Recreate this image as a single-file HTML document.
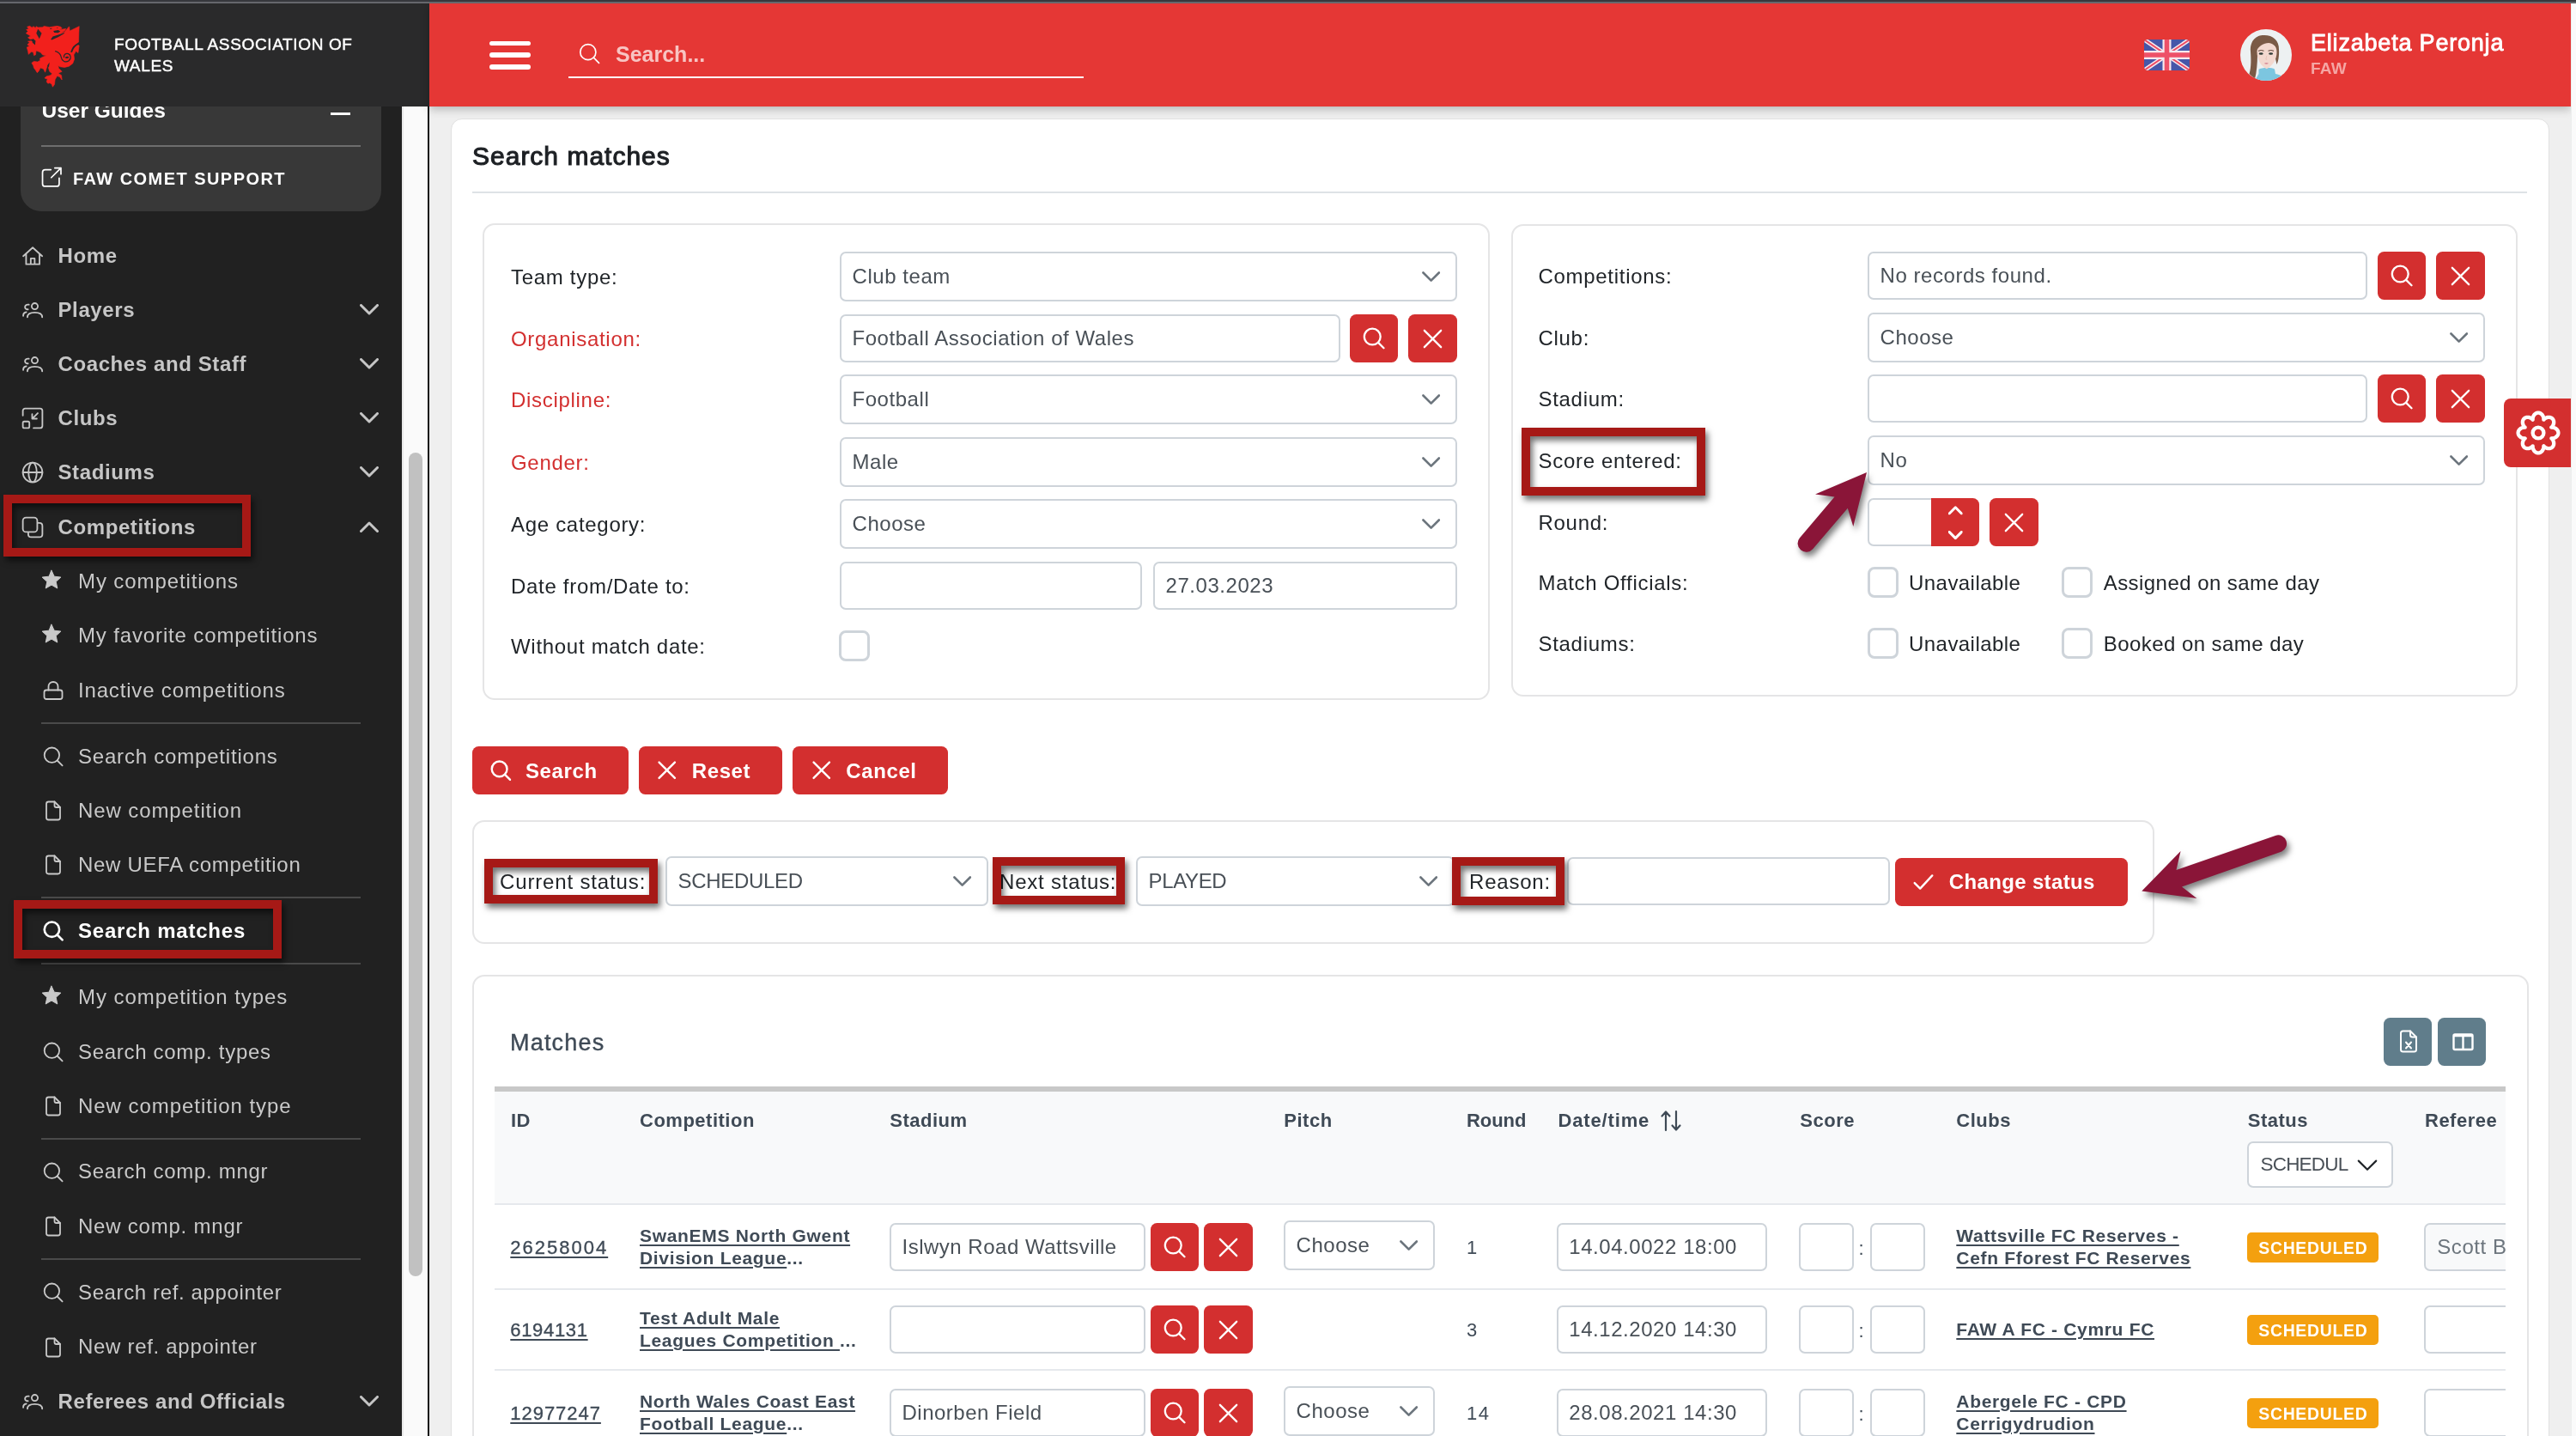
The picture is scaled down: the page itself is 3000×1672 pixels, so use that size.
<!DOCTYPE html>
<html lang="en">
<head>
<meta charset="utf-8">
<title>Search matches</title>
<style>
*{box-sizing:border-box;margin:0;padding:0}
html,body{width:3000px;height:1672px;overflow:hidden;background:#efefef;font-family:"Liberation Sans",sans-serif;font-size:24px;color:#212529;will-change:transform}
.a{position:absolute}
svg{display:block;overflow:visible}
.ic{fill:none;stroke:currentColor;stroke-width:1.5;stroke-linecap:round;stroke-linejoin:round}
#topbar{position:absolute;left:0;top:0;width:3000px;height:4px;background:#66676c;border-top:2px solid #37383d;z-index:50}
#rstrip{position:absolute;left:2994px;top:3px;width:6px;height:1669px;background:#fafafa;border-left:1.6px solid #eceeee;z-index:40}
/* header */
#logo{position:absolute;left:0;top:3px;width:500px;height:121px;background:#2a2a2b;z-index:30;color:#fff}
#hdr{position:absolute;left:500px;top:3px;width:2494px;height:121px;background:#e53735;z-index:30;box-shadow:0 3px 10px rgba(0,0,0,.25);color:#fff}
#logo .t{position:absolute;left:133px;top:36px;font-size:19px;line-height:25px;letter-spacing:.64px;-webkit-text-stroke:.45px #fff;color:#fff;white-space:nowrap}
/* sidebar */
#side{position:absolute;left:0;top:124px;width:468px;height:1548px;background:#212121;overflow:hidden;z-index:10;color:#c6c6c6}
#strack{position:absolute;left:468px;top:124px;width:30px;height:1548px;background:#fafafa;border-left:2px solid #e9e9e9;z-index:10}
#sthumb{position:absolute;left:476px;top:527px;width:16px;height:959px;border-radius:8px;background:#c1c1c1;z-index:11}
#vline{position:absolute;left:497.5px;top:124px;width:2.5px;height:1548px;background:#111;z-index:12}
.n1{position:absolute;left:0;width:468px;height:40px;font-weight:bold;font-size:24px;letter-spacing:.6px;line-height:40px;white-space:nowrap}
.n1 .i{position:absolute;left:25px;top:7px;width:26px;height:26px}
.n1 .x{position:absolute;left:67.5px;top:0}
.n1 .c{position:absolute;left:419px;top:13px;width:22px;height:13px}
.n2{position:absolute;left:0;width:468px;height:40px;font-size:24px;letter-spacing:.75px;line-height:40px;white-space:nowrap;color:#c9c9c9}
.n2 .i{position:absolute;left:50px;top:9px;width:24px;height:24px}
.n2 .x{position:absolute;left:91px;top:.4px}
.sdiv{position:absolute;left:48px;width:372px;height:2px;background:#4a4a4a}
.redbox{position:absolute;border:10px solid #a61916;box-shadow:3px 5px 7px rgba(0,0,0,.55), inset 3px 5px 7px rgba(0,0,0,.55);z-index:20;pointer-events:none}
/* main */
#main{position:absolute;left:500px;top:124px;width:2494px;height:1548px;background:#efefef;overflow:hidden}
#card{position:absolute;left:24.5px;top:14px;width:2444px;height:1700px;background:#fff;border:1.6px solid #e1e1e1;border-radius:13px}
.pnl{position:absolute;border:2px solid #e5e5e6;border-radius:14px;background:#fff}
.lbl{position:absolute;height:40px;line-height:40px;letter-spacing:.7px;white-space:nowrap;color:#212529}
.lbl.r{color:#d32f2f}
.inp{position:absolute;border:2px solid #ced4da;border-radius:7px;background:#fff;color:#495057;letter-spacing:.55px;white-space:nowrap;padding-left:12.5px;overflow:hidden}
.inp .chev{position:absolute;right:17.6px;top:50%;margin-top:-5.6px;width:21.3px;height:12.6px;color:#6c757d}
.btn{position:absolute;background:#d32f2f;border-radius:7.5px;color:#fff}
.btn svg{position:absolute;left:50%;top:50%}
.tb{position:absolute;background:#d32f2f;border-radius:7.5px;color:#fff;font-weight:bold;letter-spacing:.6px;white-space:nowrap;line-height:56px;height:56px}
.cb{position:absolute;width:36px;height:36px;border:3px solid #ced4da;border-radius:8px;background:#fff}
.th{position:absolute;height:30px;line-height:30px;font-size:22px;font-weight:bold;letter-spacing:.5px;color:#3f4a56;white-space:nowrap}
.td{position:absolute;line-height:26px;font-size:21px;color:#3f4a56;white-space:nowrap}
.td.b{font-weight:bold;letter-spacing:.68px}
.lk{text-decoration:underline;text-decoration-thickness:2px;text-underline-offset:3px}
.nd{display:inline-block;text-decoration:none}
</style>
</head>
<body>
<svg width="0" height="0" style="position:absolute">
<defs>
<symbol id="i-search" viewBox="0 0 24 24"><circle cx="10.4" cy="10.2" r="8.7"/><path d="M16.7 16.5 L22.6 22.4"/></symbol>
<symbol id="i-times" viewBox="0 0 24 24"><path d="M4 4 L20 20 M20 4 L4 20"/></symbol>
<symbol id="i-chev" viewBox="0 0 22 13"><path d="M1.5 1.5 L11 11 L20.5 1.5"/></symbol>
<symbol id="i-chevu" viewBox="0 0 22 13"><path d="M1.5 11.5 L11 2 L20.5 11.5"/></symbol>
<symbol id="i-home" viewBox="0 0 24 24"><path d="M1.9 12.2 L12.1 2.95 L22.3 12.2 M5 9.6 V20.95 H19.4 V9.6 M10 20.95 V14.7 H14.2 V20.95"/></symbol>
<symbol id="i-users" viewBox="0 0 24 24"><circle cx="14.3" cy="7.9" r="3.3"/><path d="M6.4 19.7 C6.4 16 9.5 14.6 14.3 14.6 C19.1 14.6 22.3 16 22.3 19.7"/><path d="M8 6.2 C5.4 5.6 3.8 7.2 3.8 8.7 C3.8 10.4 5.2 11.5 7 11.3"/><path d="M1.9 18.2 C1.9 15.8 3 14.6 5.2 14.3"/></symbol>
<symbol id="i-clubs" viewBox="0 0 24 24"><path d="M1.5 9 V4 C1.5 2.6 2.6 1.5 4 1.5 H20 C21.4 1.5 22.5 2.6 22.5 4 V20 C22.5 21.4 21.4 22.5 20 22.5 H13"/><rect x="1.5" y="15.5" width="7" height="7" rx="1.5"/><path d="M17.5 6.5 L11.5 12.5 M11.5 7.5 V12.5 H16.5"/></symbol>
<symbol id="i-globe" viewBox="0 0 24 24"><circle cx="12" cy="12" r="10.5"/><path d="M1.5 12 H22.5"/><ellipse cx="12" cy="12" rx="4.4" ry="10.5"/></symbol>
<symbol id="i-clone" viewBox="0 0 24 24"><rect x="1.5" y="1.5" width="15.5" height="15.5" rx="3.5"/><path d="M17.5 7.3 H19.3 C21.1 7.3 22.5 8.7 22.5 10.5 V19.3 C22.5 21.1 21.1 22.5 19.3 22.5 H10.5 C8.7 22.5 7.3 21.1 7.3 19.3 V17.5"/></symbol>
<symbol id="i-star" viewBox="0 0 24 24"><path d="M12 1.2 L15.2 8.2 L22.9 9.1 L17.2 14.3 L18.8 22 L12 18.1 L5.2 22 L6.8 14.3 L1.1 9.1 L8.8 8.2 Z" fill="currentColor" stroke-width="1"/></symbol>
<symbol id="i-lock" viewBox="0 0 24 24"><rect x="1.5" y="11.5" width="21" height="10.5" rx="2.5"/><path d="M6.5 11.5 V7.5 C6.5 4 9 2 12 2 C15 2 17.5 4 17.5 7.5 V11.5"/></symbol>
<symbol id="i-file" viewBox="0 0 24 24"><path d="M13.5 1.5 H6.5 C5 1.5 4 2.5 4 4 V20 C4 21.5 5 22.5 6.5 22.5 H17.5 C19 22.5 20 21.5 20 20 V8 Z"/><path d="M13.5 1.5 V6 C13.5 7.2 14.3 8 15.5 8 H20"/></symbol>
<symbol id="i-ext" viewBox="0 0 24 24"><path d="M11 3.5 H4.5 C2.8 3.5 1.5 4.8 1.5 6.5 V19.5 C1.5 21.2 2.8 22.5 4.5 22.5 H17.5 C19.2 22.5 20.5 21.2 20.5 19.5 V13"/><path d="M15.5 1.5 H22.5 V8.5 M22.5 1.5 L11.5 12.5"/></symbol>
<symbol id="i-check" viewBox="0 0 24 24"><path d="M2.5 13 L8.5 19 L21.5 5"/></symbol>
</defs>
</svg>

<div id="topbar"></div><div id="rstrip"></div>
<div id="logo">
<svg class="a" style="left:20px;top:17px" width="90" height="90" viewBox="0 0 1436 1436"><path fill="#f2201c" stroke="#f2201c" stroke-width="10" stroke-linejoin="round" d="M165 300 L200 262 L170 232 L215 215 L185 180 L235 165 L275 195 L300 170 L340 200 L355 172 L385 190 L470 188 L500 168 L600 186 L740 165 L810 180 L832 206 L775 236 L905 214 L885 250 L800 300 L880 275 L960 178 L968 176 L976 256 L1152 170 L1146 300 L1142 462 L1100 500 L1152 528 L1132 662 L1092 632 L1052 700 L1062 780 L1032 860 L962 912 L880 932 L800 922 L762 902 L772 950 L832 1010 L762 1040 L822 1080 L832 1164 L790 1110 L742 1092 L704 1160 L694 1250 L660 1296 L640 1240 L602 1222 L572 1232 L546 1200 L562 1150 L510 1132 L540 1100 L620 1080 L650 1050 L602 1010 L582 940 L600 840 L562 900 L540 962 L520 1024 L490 962 L432 940 L402 1000 L372 1032 L340 980 L310 940 L300 900 L270 850 L310 820 L380 830 L430 800 L420 770 L470 740 L540 716 L470 700 L440 660 L400 640 L352 622 L342 700 L312 712 L300 652 L262 642 L212 692 L200 630 L180 560 L230 540 L190 510 L230 470 L200 450 L262 440 L330 500 L342 440 L300 400 L240 410 L200 380 L250 350 Z"/><g fill="#2a2a2b"><path d="M385 218 L455 300 L412 402 L356 300 Z"/><path d="M292 402 L340 440 L334 520 L282 470 Z"/><path d="M672 256 L762 240 L802 262 L760 292 L690 286 Z"/><path d="M625 412 L662 360 L790 320 L884 282 L862 312 L760 372 L642 424 Z"/><ellipse cx="626" cy="210" rx="20" ry="8"/><ellipse cx="746" cy="198" rx="14" ry="6"/><ellipse cx="926" cy="748" rx="34" ry="17" transform="rotate(-12 926 748)"/><path d="M560 900 L600 836 L590 930 Z"/></g><g fill="none" stroke="#2a2a2b" stroke-width="22" stroke-linecap="round"><path d="M712 632 C770 650 810 690 820 750 C830 820 900 850 960 810 C1010 770 1000 700 950 680 C900 665 860 700 870 745" stroke-width="20"/><path d="M1010 640 C1030 580 1070 520 1140 494" stroke-width="30"/></g></svg>
<div class="t">FOOTBALL ASSOCIATION OF<br>WALES</div>
</div>
<div id="hdr">
<div class="a" style="left:70px;top:44.5px;width:48px;height:5.5px;border-radius:3px;background:#fff"></div>
<div class="a" style="left:70px;top:58.4px;width:48px;height:5.5px;border-radius:3px;background:#fff"></div>
<div class="a" style="left:70px;top:72.2px;width:48px;height:5.5px;border-radius:3px;background:#fff"></div>
<div class="a" style="left:162px;top:85.5px;width:600px;height:2.5px;background:#fff"></div>
<svg class="ic a" width="25" height="25" style="left:173.5px;top:46.5px;stroke-width:1.6;color:#fff"><use href="#i-search"/></svg>
<div class="a" style="left:217px;top:40px;height:40px;line-height:40px;font-size:25px;font-weight:bold;letter-spacing:0;color:#f8c4c2">Search...</div>
<svg class="a" style="left:1996.7px;top:43px" width="53" height="36" viewBox="0 0 53 36"><defs><clipPath id="fc"><rect width="53" height="36" rx="4.5"/></clipPath></defs><g clip-path="url(#fc)"><rect width="53" height="36" fill="#4657a9"/><path d="M0 0 L53 36 M53 0 L0 36" stroke="#f6e9ee" stroke-width="5"/><path d="M0 0 L53 36 M53 0 L0 36" stroke="#ec4a62" stroke-width="1.9"/><path d="M26.5 0 V36 M0 18 H53" stroke="#f6e9ee" stroke-width="10"/><path d="M26.5 0 V36 M0 18 H53" stroke="#ee5168" stroke-width="5.6"/></g></svg>
<svg class="a" style="left:2109px;top:31px" width="60" height="60" viewBox="0 0 60 60"><defs><clipPath id="ac"><circle cx="30" cy="30" r="30"/></clipPath></defs><g clip-path="url(#ac)"><rect width="60" height="60" fill="#edf1f2"/><path d="M12 26 C11 12 20 6.5 28 7 C38 7 45.5 13 45 24 C45.5 32 44 38 42.5 41 L40 30 L20 30 C20 40 19 50 17 58 L10.5 52 C13 44 12.5 34 12 26 Z" fill="#7a5a46"/><path d="M21.5 47 C24 44.5 37 44.5 40 46.5 L41 52 C44 52.5 47 53.5 49 55 L49 62 L16 62 C18 58 20 55 21.5 52 Z" fill="#7cc6e0"/><path d="M19.5 26 C19.5 18 24 15 30.5 15 C38 15 42.5 19 42.5 27 C42.5 35 37.5 43 30.8 46.2 C24.5 43.5 19.5 36 19.5 26 Z" fill="#f3d8cf"/><path d="M19 25 C19.5 17 24 13 30 12.8 C37 12.5 42.5 16 43.5 24 C41.5 19.5 37.5 16.2 33 16 C27 16.5 22 19 19 25 Z" fill="#7a5a46"/><ellipse cx="24.2" cy="28.5" rx="2.5" ry="1.25" fill="#2f3a36"/><ellipse cx="35.6" cy="28.5" rx="2.5" ry="1.25" fill="#2f3a36"/><path d="M21 25.3 Q24 23.8 27.5 25.2 M32.5 25.2 Q36 23.8 39 25.3" stroke="#5a4034" stroke-width="1" fill="none"/><path d="M30.8 31 L29.8 35 L31.2 35.3" stroke="#e0b9ad" stroke-width=".6" fill="none"/><path d="M27.8 39.8 Q30.4 38.2 33 39.8 Q30.4 41.8 27.8 39.8 Z" fill="#d98a98"/></g></svg>
<div class="a" style="left:2191px;top:26.5px;font-size:27px;line-height:40px;letter-spacing:.8px;-webkit-text-stroke:.85px #fff;white-space:nowrap;color:#fff">Elizabeta Peronja</div>
<div class="a" style="left:2191px;top:62px;font-size:19px;line-height:30px;font-weight:bold;letter-spacing:.3px;color:#f5a5a3">FAW</div>
</div>
<div id="side">
<div class="a" style="left:24px;top:-64px;width:420px;height:186px;background:#383838;border-radius:24px"></div>
<div class="a" style="left:48.5px;top:-15px;height:40px;line-height:40px;font-size:24.5px;font-weight:bold;letter-spacing:0;color:#fff">User Guides</div>
<div class="a" style="left:384.5px;top:6.5px;width:23.5px;height:3px;background:#fff"></div>
<div class="a" style="left:48px;top:45px;width:372px;height:2px;background:#6e6e6e"></div>
<svg class="ic a" width="24.5" height="24.5" style="left:48px;top:70px;stroke-width:1.7;color:#fff"><use href="#i-ext"/></svg>
<div class="a" style="left:85px;top:64.30000000000001px;height:40px;line-height:40px;font-size:20px;font-weight:bold;letter-spacing:1.45px;color:#fff;white-space:nowrap">FAW COMET SUPPORT</div>
<div class="n1" style="top:153.60000000000002px"><svg class="ic i" width="26" height="26" style="stroke-width:1.7"><use href="#i-home"/></svg><span class="x">Home</span></div>
<div class="n1" style="top:216.8px"><svg class="ic i" width="26" height="26" style="stroke-width:1.7"><use href="#i-users"/></svg><span class="x">Players</span><svg class="ic c" width="22" height="13" style="stroke-width:3"><use href="#i-chev"/></svg></div>
<div class="n1" style="top:279.8px"><svg class="ic i" width="26" height="26" style="stroke-width:1.7"><use href="#i-users"/></svg><span class="x">Coaches and Staff</span><svg class="ic c" width="22" height="13" style="stroke-width:3"><use href="#i-chev"/></svg></div>
<div class="n1" style="top:343.3px"><svg class="ic i" width="26" height="26" style="stroke-width:1.7"><use href="#i-clubs"/></svg><span class="x">Clubs</span><svg class="ic c" width="22" height="13" style="stroke-width:3"><use href="#i-chev"/></svg></div>
<div class="n1" style="top:406.29999999999995px"><svg class="ic i" width="26" height="26" style="stroke-width:1.7"><use href="#i-globe"/></svg><span class="x">Stadiums</span><svg class="ic c" width="22" height="13" style="stroke-width:3"><use href="#i-chev"/></svg></div>
<div class="n1" style="top:469.70000000000005px"><svg class="ic i" width="26" height="26" style="stroke-width:1.7"><use href="#i-clone"/></svg><span class="x">Competitions</span><svg class="ic c" width="22" height="13" style="stroke-width:3"><use href="#i-chevu"/></svg></div>
<div class="n1" style="top:1487.8px"><svg class="ic i" width="26" height="26" style="stroke-width:1.7"><use href="#i-users"/></svg><span class="x">Referees and Officials</span><svg class="ic c" width="22" height="13" style="stroke-width:3"><use href="#i-chev"/></svg></div>
<div class="n2" style="top:532.7px;letter-spacing:0.9px;"><svg class="ic i" width="27.5" height="27.5" style="stroke-width:1.8;margin-left:-1.75px;margin-top:-2.35px"><use href="#i-star"/></svg><span class="x">My competitions</span></div>
<div class="n2" style="top:595.8px;letter-spacing:0.86px;"><svg class="ic i" width="27.5" height="27.5" style="stroke-width:1.8;margin-left:-1.75px;margin-top:-2.35px"><use href="#i-star"/></svg><span class="x">My favorite competitions</span></div>
<div class="n2" style="top:659.3px;letter-spacing:0.83px;"><svg class="ic i" width="24" height="24" style="stroke-width:1.8;margin-left:0.0px;margin-top:0.0px"><use href="#i-lock"/></svg><span class="x">Inactive competitions</span></div>
<div class="n2" style="top:736.2px;letter-spacing:0.8px;"><svg class="ic i" width="24" height="24" style="stroke-width:1.8;margin-left:0.0px;margin-top:0.0px"><use href="#i-search"/></svg><span class="x">Search competitions</span></div>
<div class="n2" style="top:799.3px;letter-spacing:0.9px;"><svg class="ic i" width="24" height="24" style="stroke-width:1.8;margin-left:0.0px;margin-top:0.0px"><use href="#i-file"/></svg><span class="x">New competition</span></div>
<div class="n2" style="top:862.4px;letter-spacing:0.7px;"><svg class="ic i" width="24" height="24" style="stroke-width:1.8;margin-left:0.0px;margin-top:0.0px"><use href="#i-file"/></svg><span class="x">New UEFA competition</span></div>
<div class="n2" style="top:939.2px;font-weight:bold;color:#fff;letter-spacing:.78px;"><svg class="ic i" width="24" height="24" style="stroke-width:2.6;margin-left:0.0px;margin-top:0.0px"><use href="#i-search"/></svg><span class="x">Search matches</span></div>
<div class="n2" style="top:1016.5px;letter-spacing:0.94px;"><svg class="ic i" width="27.5" height="27.5" style="stroke-width:1.8;margin-left:-1.75px;margin-top:-2.35px"><use href="#i-star"/></svg><span class="x">My competition types</span></div>
<div class="n2" style="top:1080.2px;letter-spacing:0.7px;"><svg class="ic i" width="24" height="24" style="stroke-width:1.8;margin-left:0.0px;margin-top:0.0px"><use href="#i-search"/></svg><span class="x">Search comp. types</span></div>
<div class="n2" style="top:1143.4px;letter-spacing:0.96px;"><svg class="ic i" width="24" height="24" style="stroke-width:1.8;margin-left:0.0px;margin-top:0.0px"><use href="#i-file"/></svg><span class="x">New competition type</span></div>
<div class="n2" style="top:1220px;letter-spacing:0.69px;"><svg class="ic i" width="24" height="24" style="stroke-width:1.8;margin-left:0.0px;margin-top:0.0px"><use href="#i-search"/></svg><span class="x">Search comp. mngr</span></div>
<div class="n2" style="top:1283.3px;letter-spacing:0.78px;"><svg class="ic i" width="24" height="24" style="stroke-width:1.8;margin-left:0.0px;margin-top:0.0px"><use href="#i-file"/></svg><span class="x">New comp. mngr</span></div>
<div class="n2" style="top:1360.4px;letter-spacing:0.63px;"><svg class="ic i" width="24" height="24" style="stroke-width:1.8;margin-left:0.0px;margin-top:0.0px"><use href="#i-search"/></svg><span class="x">Search ref. appointer</span></div>
<div class="n2" style="top:1423.8px;letter-spacing:0.7px;"><svg class="ic i" width="24" height="24" style="stroke-width:1.8;margin-left:0.0px;margin-top:0.0px"><use href="#i-file"/></svg><span class="x">New ref. appointer</span></div>
<div class="sdiv" style="top:716.8px"></div>
<div class="sdiv" style="top:919.8px"></div>
<div class="sdiv" style="top:996.5px"></div>
<div class="sdiv" style="top:1200.5px"></div>
<div class="sdiv" style="top:1340.8px"></div>
<div class="redbox" style="left:4px;top:452px;width:288px;height:72px"></div>
<div class="redbox" style="left:16px;top:924px;width:312px;height:68px"></div>
</div>
<div id="strack"></div><div id="sthumb"></div><div id="vline"></div>
<div id="main">
<div id="card"></div>
<div class="a" style="left:50px;top:32.6px;height:50px;line-height:50px;font-size:30px;letter-spacing:1px;-webkit-text-stroke:1.1px #1d2024;color:#1d2024;white-space:nowrap">Search matches</div>
<div class="a" style="left:50px;top:99px;width:2393px;height:2px;background:#dee2e6"></div>
<div class="pnl" style="left:61.8px;top:136.4px;width:1173.2px;height:554.6px"></div>
<div class="pnl" style="left:1259.6px;top:136.6px;width:1172.4px;height:550.8px"></div>
<div class="lbl" style="left:95px;top:179.3px;">Team type:</div>
<div class="lbl r" style="left:95px;top:251.25px;">Organisation:</div>
<div class="lbl r" style="left:95px;top:322.25px;">Discipline:</div>
<div class="lbl r" style="left:95px;top:395.2px;">Gender:</div>
<div class="lbl" style="left:95px;top:467.2px;">Age category:</div>
<div class="lbl" style="left:95px;top:539.15px;">Date from/Date to:</div>
<div class="lbl" style="left:95px;top:609.25px;">Without match date:</div>
<div class="inp" style="left:478px;top:169px;width:719px;height:58px;line-height:54px;">Club team<svg class="ic chev" width="21.3" height="12.6" style="stroke-width:2.7"><use href="#i-chev"/></svg></div>
<div class="inp" style="left:478px;top:242px;width:583px;height:56px;line-height:52px;">Football Association of Wales</div>
<div class="btn" style="left:1072px;top:242px;width:56px;height:56px;"><svg class="ic" width="26" height="26" style="margin-left:-13.0px;margin-top:-13.0px;stroke-width:2.12"><use href="#i-search"/></svg></div>
<div class="btn" style="left:1140px;top:242px;width:57px;height:56px;"><svg class="ic" width="29" height="29" style="margin-left:-14.5px;margin-top:-14.5px;stroke-width:1.9"><use href="#i-times"/></svg></div>
<div class="inp" style="left:478px;top:312px;width:719px;height:58px;line-height:54px;">Football<svg class="ic chev" width="21.3" height="12.6" style="stroke-width:2.7"><use href="#i-chev"/></svg></div>
<div class="inp" style="left:478px;top:385px;width:719px;height:58px;line-height:54px;">Male<svg class="ic chev" width="21.3" height="12.6" style="stroke-width:2.7"><use href="#i-chev"/></svg></div>
<div class="inp" style="left:478px;top:457px;width:719px;height:58px;line-height:54px;">Choose<svg class="ic chev" width="21.3" height="12.6" style="stroke-width:2.7"><use href="#i-chev"/></svg></div>
<div class="inp" style="left:478px;top:530px;width:352px;height:56px;line-height:52px;"></div>
<div class="inp" style="left:843px;top:530px;width:354px;height:56px;line-height:52px;">27.03.2023</div>
<div class="cb" style="left:477.4px;top:610px"></div>
<div class="lbl" style="left:1291.5px;top:178.25px;">Competitions:</div>
<div class="lbl" style="left:1291.5px;top:250.4px;">Club:</div>
<div class="lbl" style="left:1291.5px;top:320.75px;">Stadium:</div>
<div class="lbl" style="left:1291.5px;top:393.25px;">Score entered:</div>
<div class="lbl" style="left:1291.5px;top:465.35px;">Round:</div>
<div class="lbl" style="left:1291.5px;top:534.6px;">Match Officials:</div>
<div class="lbl" style="left:1291.5px;top:605.5px;">Stadiums:</div>
<div class="inp" style="left:1675px;top:169px;width:582px;height:56px;line-height:52px;">No records found.</div>
<div class="btn" style="left:2269px;top:169px;width:56px;height:56px;"><svg class="ic" width="26" height="26" style="margin-left:-13.0px;margin-top:-13.0px;stroke-width:2.12"><use href="#i-search"/></svg></div>
<div class="btn" style="left:2337px;top:169px;width:57px;height:56px;"><svg class="ic" width="29" height="29" style="margin-left:-14.5px;margin-top:-14.5px;stroke-width:1.9"><use href="#i-times"/></svg></div>
<div class="inp" style="left:1675px;top:240px;width:719px;height:58px;line-height:54px;">Choose<svg class="ic chev" width="21.3" height="12.6" style="stroke-width:2.7"><use href="#i-chev"/></svg></div>
<div class="inp" style="left:1675px;top:312px;width:582px;height:56px;line-height:52px;"></div>
<div class="btn" style="left:2269px;top:312px;width:56px;height:56px;"><svg class="ic" width="26" height="26" style="margin-left:-13.0px;margin-top:-13.0px;stroke-width:2.12"><use href="#i-search"/></svg></div>
<div class="btn" style="left:2337px;top:312px;width:57px;height:56px;"><svg class="ic" width="29" height="29" style="margin-left:-14.5px;margin-top:-14.5px;stroke-width:1.9"><use href="#i-times"/></svg></div>
<div class="inp" style="left:1675px;top:383px;width:719px;height:58px;line-height:54px;">No<svg class="ic chev" width="21.3" height="12.6" style="stroke-width:2.7"><use href="#i-chev"/></svg></div>
<div class="inp" style="left:1675px;top:456px;width:85px;height:56px;line-height:52px;"></div>
<div class="btn" style="left:1749px;top:456px;width:56px;height:56px;border-radius:0 7.5px 7.5px 0"><svg class="ic" width="16.6" height="10.4" style="left:50%;top:8.6px;margin-left:-8.3px;stroke-width:4"><use href="#i-chevu"/></svg><svg class="ic" width="16.6" height="10.4" style="left:50%;top:37.6px;margin-left:-8.3px;stroke-width:4"><use href="#i-chev"/></svg></div>
<div class="btn" style="left:1817px;top:456px;width:57px;height:56px;"><svg class="ic" width="29" height="29" style="margin-left:-14.5px;margin-top:-14.5px;stroke-width:1.9"><use href="#i-times"/></svg></div>
<div class="cb" style="left:1675px;top:536px"></div>
<div class="lbl" style="left:1723px;top:534.6px;letter-spacing:.45px">Unavailable</div>
<div class="cb" style="left:1901px;top:536px"></div>
<div class="lbl" style="left:1949.7px;top:534.6px;letter-spacing:.45px">Assigned on same day</div>
<div class="cb" style="left:1675px;top:607px"></div>
<div class="lbl" style="left:1723px;top:605.6px;letter-spacing:.45px">Unavailable</div>
<div class="cb" style="left:1901px;top:607px"></div>
<div class="lbl" style="left:1949.7px;top:605.6px;letter-spacing:.45px">Booked on same day</div>
<div class="redbox" style="left:1272px;top:374px;width:214px;height:78.5px"></div>
<div class="a" style="left:2416px;top:340px;width:78px;height:80px;background:#d32f2f;border-radius:8px 0 0 8px;color:#fff"><svg class="a" style="left:15px;top:15px" width="50" height="50" viewBox="0 0 50 50" fill="none" stroke="#fff" stroke-width="4.3" stroke-linejoin="round"><circle cx="25" cy="25" r="6.4"/><path d="M25.00 1.60 L25.61 1.64 L26.22 1.74 L26.82 1.92 L27.40 2.17 L27.96 2.49 L28.50 2.88 L29.02 3.33 L29.50 3.84 L29.94 4.42 L30.34 5.06 L30.70 5.76 L31.00 6.53 L31.24 7.38 L31.40 8.34 L31.35 9.66 L32.26 8.69 L33.05 8.13 L33.82 7.70 L34.57 7.37 L35.32 7.12 L36.06 6.95 L36.78 6.86 L37.49 6.83 L38.17 6.88 L38.82 6.99 L39.45 7.16 L40.03 7.40 L40.58 7.69 L41.09 8.05 L41.55 8.45 L41.95 8.91 L42.31 9.42 L42.60 9.97 L42.84 10.55 L43.01 11.18 L43.12 11.83 L43.17 12.51 L43.14 13.22 L43.05 13.94 L42.88 14.68 L42.63 15.43 L42.30 16.18 L41.87 16.95 L41.31 17.74 L40.34 18.65 L41.66 18.60 L42.62 18.76 L43.47 19.00 L44.24 19.30 L44.94 19.66 L45.58 20.06 L46.16 20.50 L46.67 20.98 L47.12 21.50 L47.51 22.04 L47.83 22.60 L48.08 23.18 L48.26 23.78 L48.36 24.39 L48.40 25.00 L48.36 25.61 L48.26 26.22 L48.08 26.82 L47.83 27.40 L47.51 27.96 L47.12 28.50 L46.67 29.02 L46.16 29.50 L45.58 29.94 L44.94 30.34 L44.24 30.70 L43.47 31.00 L42.62 31.24 L41.66 31.40 L40.34 31.35 L41.31 32.26 L41.87 33.05 L42.30 33.82 L42.63 34.57 L42.88 35.32 L43.05 36.06 L43.14 36.78 L43.17 37.49 L43.12 38.17 L43.01 38.82 L42.84 39.45 L42.60 40.03 L42.31 40.58 L41.95 41.09 L41.55 41.55 L41.09 41.95 L40.58 42.31 L40.03 42.60 L39.45 42.84 L38.82 43.01 L38.17 43.12 L37.49 43.17 L36.78 43.14 L36.06 43.05 L35.32 42.88 L34.57 42.63 L33.82 42.30 L33.05 41.87 L32.26 41.31 L31.35 40.34 L31.40 41.66 L31.24 42.62 L31.00 43.47 L30.70 44.24 L30.34 44.94 L29.94 45.58 L29.50 46.16 L29.02 46.67 L28.50 47.12 L27.96 47.51 L27.40 47.83 L26.82 48.08 L26.22 48.26 L25.61 48.36 L25.00 48.40 L24.39 48.36 L23.78 48.26 L23.18 48.08 L22.60 47.83 L22.04 47.51 L21.50 47.12 L20.98 46.67 L20.50 46.16 L20.06 45.58 L19.66 44.94 L19.30 44.24 L19.00 43.47 L18.76 42.62 L18.60 41.66 L18.65 40.34 L17.74 41.31 L16.95 41.87 L16.18 42.30 L15.43 42.63 L14.68 42.88 L13.94 43.05 L13.22 43.14 L12.51 43.17 L11.83 43.12 L11.18 43.01 L10.55 42.84 L9.97 42.60 L9.42 42.31 L8.91 41.95 L8.45 41.55 L8.05 41.09 L7.69 40.58 L7.40 40.03 L7.16 39.45 L6.99 38.82 L6.88 38.17 L6.83 37.49 L6.86 36.78 L6.95 36.06 L7.12 35.32 L7.37 34.57 L7.70 33.82 L8.13 33.05 L8.69 32.26 L9.66 31.35 L8.34 31.40 L7.38 31.24 L6.53 31.00 L5.76 30.70 L5.06 30.34 L4.42 29.94 L3.84 29.50 L3.33 29.02 L2.88 28.50 L2.49 27.96 L2.17 27.40 L1.92 26.82 L1.74 26.22 L1.64 25.61 L1.60 25.00 L1.64 24.39 L1.74 23.78 L1.92 23.18 L2.17 22.60 L2.49 22.04 L2.88 21.50 L3.33 20.98 L3.84 20.50 L4.42 20.06 L5.06 19.66 L5.76 19.30 L6.53 19.00 L7.38 18.76 L8.34 18.60 L9.66 18.65 L8.69 17.74 L8.13 16.95 L7.70 16.18 L7.37 15.43 L7.12 14.68 L6.95 13.94 L6.86 13.22 L6.83 12.51 L6.88 11.83 L6.99 11.18 L7.16 10.55 L7.40 9.97 L7.69 9.42 L8.05 8.91 L8.45 8.45 L8.91 8.05 L9.42 7.69 L9.97 7.40 L10.55 7.16 L11.18 6.99 L11.83 6.88 L12.51 6.83 L13.22 6.86 L13.94 6.95 L14.68 7.12 L15.43 7.37 L16.18 7.70 L16.95 8.13 L17.74 8.69 L18.65 9.66 L18.60 8.34 L18.76 7.38 L19.00 6.53 L19.30 5.76 L19.66 5.06 L20.06 4.42 L20.50 3.84 L20.98 3.33 L21.50 2.88 L22.04 2.49 L22.60 2.17 L23.18 1.92 L23.78 1.74 L24.39 1.64 Z"/></svg></div>
<svg class="a" style="left:1580px;top:416px;z-index:21;filter:drop-shadow(3px 5px 3.5px rgba(0,0,0,.5))" width="110" height="120" viewBox="0 0 110 120"><path d="M94 10 L34 35.6 L56.5 38.6 L16 86.2 A10 10 0 0 0 31.2 99.2 L71.8 51.7 L78.3 73.1 Z" fill="#8a1538"/></svg>
<div class="tb" style="left:50px;top:744.8px;width:181.5px"><svg class="ic a" width="24.5" height="24.5" style="left:20.75px;top:15.75px;stroke-width:2.36"><use href="#i-search"/></svg><span class="a" style="left:62px;top:1px">Search</span></div>
<div class="tb" style="left:243.8px;top:744.8px;width:167.0px"><svg class="ic a" width="27.5" height="27.5" style="left:19.25px;top:14.25px;stroke-width:2.13"><use href="#i-times"/></svg><span class="a" style="left:62px;top:1px">Reset</span></div>
<div class="tb" style="left:423.3px;top:744.8px;width:180.5px"><svg class="ic a" width="27.5" height="27.5" style="left:19.25px;top:14.25px;stroke-width:2.13"><use href="#i-times"/></svg><span class="a" style="left:62px;top:1px">Cancel</span></div>
<div class="pnl" style="left:49.6px;top:830.8px;width:1959.2000000000003px;height:143.79999999999995px"></div>
<div class="lbl" style="left:82px;top:883.3px;letter-spacing:.85px">Current status:</div>
<div class="inp" style="left:275px;top:873px;width:376px;height:58px;line-height:54px;letter-spacing:-.3px">SCHEDULED<svg class="ic chev" width="21.3" height="12.6" style="stroke-width:2.7"><use href="#i-chev"/></svg></div>
<div class="lbl" style="left:664px;top:883.3px;letter-spacing:.8px">Next status:</div>
<div class="inp" style="left:823px;top:873px;width:371px;height:58px;line-height:54px;letter-spacing:-.35px">PLAYED<svg class="ic chev" width="21.3" height="12.6" style="stroke-width:2.7"><use href="#i-chev"/></svg></div>
<div class="lbl" style="left:1211px;top:883.3px;letter-spacing:.8px">Reason:</div>
<div class="inp" style="left:1325px;top:874px;width:376px;height:56px;line-height:52px;"></div>
<div class="tb" style="left:1706.8px;top:875px;width:271px"><svg class="ic a" width="26" height="26" style="left:20px;top:15px;stroke-width:2.2"><use href="#i-check"/></svg><span class="a" style="left:63px;top:0;letter-spacing:.35px">Change status</span></div>
<div class="redbox" style="left:63.8px;top:876px;width:202px;height:51.5px;border-width:10px"></div>
<div class="redbox" style="left:656px;top:874px;width:154px;height:55px;border-width:10px"></div>
<div class="redbox" style="left:1191px;top:874px;width:131px;height:56px;border-width:10px"></div>
<svg class="a" style="left:1985px;top:841px;z-index:21;filter:drop-shadow(3px 5px 3.5px rgba(0,0,0,.5))" width="190" height="95" viewBox="0 0 190 95"><path d="M9.3 72.5 L54.6 26.1 L49.5 47.9 L165.6 7.7 A10 10 0 0 1 172.2 26.5 L56 67.6 L73.4 81 Z" fill="#8a1538"/></svg>
<div class="pnl" style="left:49.8px;top:1011px;width:2394.8px;height:700px"></div>
<div class="a" style="left:94px;top:1064.5px;height:50px;line-height:50px;font-size:27px;letter-spacing:1.2px;color:#3f4a56;-webkit-text-stroke:.4px #3f4a56;white-space:nowrap">Matches</div>
<div class="a" style="left:2276px;top:1061px;width:56px;height:55.5px;background:#607d8b;border-radius:7.5px;color:#fff"><svg class="a" style="left:16.5px;top:14px" width="24" height="27" viewBox="0 0 24 27" fill="none" stroke="#fff" stroke-width="2" stroke-linecap="round" stroke-linejoin="round"><path d="M14 1.5 H5.5 C3.8 1.5 3 2.6 3 4 V23 C3 24.6 3.8 25.5 5.5 25.5 H18.5 C20.2 25.5 21 24.6 21 23 V8.5 Z"/><path d="M14 1.5 V6 C14 7.7 14.8 8.5 16.5 8.5 H21"/><path d="M9 14.5 L15 21.5 M15 14.5 L9 21.5"/></svg></div>
<div class="a" style="left:2339px;top:1061px;width:56px;height:55.5px;background:#607d8b;border-radius:7.5px;color:#fff"><svg class="a" style="left:17px;top:16.5px" width="25" height="22" viewBox="0 0 25 22" fill="none" stroke="#fff" stroke-width="2.4" stroke-linejoin="round"><rect x="1.5" y="2.5" width="22" height="17.5" rx="1.5"/><path d="M12.5 2.5 V20 M1.5 4 H23.5"/></svg></div>
<div class="a" style="left:76px;top:1141px;width:2342px;height:500px;overflow:hidden">
<div class="a" style="left:0;top:0;width:2342px;height:5.75px;background:#c8c8c8"></div>
<div class="a" style="left:0;top:5.75px;width:2342px;height:130.25px;background:#f8f9fa"></div>
<div class="a" style="left:0;top:135.8px;width:2342px;height:2px;background:#e6e9ed"></div>
<div class="a" style="left:0;top:235.2px;width:2342px;height:2px;background:#e6e9ed"></div>
<div class="a" style="left:0;top:329.2px;width:2342px;height:2px;background:#e6e9ed"></div>
<div class="th" style="left:19px;top:24.8px;">ID</div>
<div class="th" style="left:169px;top:24.8px;">Competition</div>
<div class="th" style="left:460.3px;top:24.8px;">Stadium</div>
<div class="th" style="left:919.3px;top:24.8px;">Pitch</div>
<div class="th" style="left:1132px;top:24.8px;letter-spacing:-.05px;">Round</div>
<div class="th" style="left:1238.5px;top:24.8px;letter-spacing:.85px;">Date/time</div>
<div class="th" style="left:1520.3px;top:24.8px;">Score</div>
<div class="th" style="left:1702.3px;top:24.8px;">Clubs</div>
<div class="th" style="left:2041.8px;top:24.8px;">Status</div>
<div class="th" style="left:2248px;top:24.8px;">Referee</div>
<svg class="a" style="left:1357.5px;top:27.5px" width="24" height="24" viewBox="0 0 24 24" fill="none" stroke="#3f4a56" stroke-width="2.2" stroke-linecap="round" stroke-linejoin="round"><path d="M6 23 V2 M1.5 6.5 L6 1.5 L10.5 6.5 M18 1 V22 M13.5 17.5 L18 22.5 L22.5 17.5"/></svg>
<div class="inp" style="left:2041px;top:64px;width:170px;height:54px;line-height:50px;padding-left:13.5px;font-size:22.5px;letter-spacing:-.8px">SCHEDUL<svg class="ic a" width="24" height="14" style="left:126px;top:19px;stroke-width:2;color:#212529"><use href="#i-chev"/></svg></div>
<div class="td lk" style="left:18.3px;top:175.0px;font-size:22px;letter-spacing:2px;font-weight:normal;-webkit-text-stroke:.35px #3f4a56">26258004</div>
<div class="td lk b" style="left:169px;top:161.0px">SwanEMS North Gwent<br>Division League<span class="nd">...</span></div>
<div class="inp" style="left:460px;top:159px;width:298px;height:56px;line-height:52px;letter-spacing:.5px">Islwyn Road Wattsville</div>
<div class="btn" style="left:764px;top:159px;width:56px;height:56px"><svg class="ic" width="26" height="26" style="margin-left:-13px;margin-top:-13px;stroke-width:2.12"><use href="#i-search"/></svg></div>
<div class="btn" style="left:826px;top:159px;width:57px;height:56px"><svg class="ic" width="29" height="29" style="margin-left:-14.5px;margin-top:-14.5px;stroke-width:1.9"><use href="#i-times"/></svg></div>
<div class="inp" style="left:919px;top:156px;width:176px;height:58px;line-height:54px;padding-left:12.5px">Choose<svg class="ic chev" width="21.3" height="12.6" style="stroke-width:2.7"><use href="#i-chev"/></svg></div>
<div class="td" style="left:1132px;top:175.0px;font-size:22px;letter-spacing:1.5px">1</div>
<div class="inp" style="left:1236.8px;top:159px;width:245.6px;height:56px;line-height:52px;letter-spacing:.55px;padding-left:12.5px">14.04.0022 18:00</div>
<div class="inp" style="left:1519px;top:159px;width:64px;height:56px"></div>
<div class="td" style="left:1588.5px;top:176.0px;font-size:22px">:</div>
<div class="inp" style="left:1602px;top:159px;width:64px;height:56px"></div>
<div class="td lk b" style="left:1702.3px;top:161.0px">Wattsville FC Reserves -<br>Cefn Fforest FC Reserves</div>
<div class="a" style="left:2041px;top:169.5px;width:153px;height:35px;border-radius:5px;background:#f4a00f;color:#fff;font-weight:bold;font-size:19.4px;letter-spacing:.72px;line-height:36px;text-align:center;padding-left:.7px">SCHEDULED</div>
<div class="inp" style="left:2246.8px;top:159px;width:200px;height:56px;line-height:52px;padding-left:13.5px;background:#f8f9fa;color:#6c757d;">Scott B</div>
<div class="td lk" style="left:18.3px;top:271.0px;font-size:22px;letter-spacing:0.67px;font-weight:normal;-webkit-text-stroke:.35px #3f4a56">6194131</div>
<div class="td lk b" style="left:169px;top:257.0px">Test Adult Male<br>Leagues Competition <span class="nd">...</span></div>
<div class="inp" style="left:460px;top:255px;width:298px;height:56px;line-height:52px;letter-spacing:.5px"></div>
<div class="btn" style="left:764px;top:255px;width:56px;height:56px"><svg class="ic" width="26" height="26" style="margin-left:-13px;margin-top:-13px;stroke-width:2.12"><use href="#i-search"/></svg></div>
<div class="btn" style="left:826px;top:255px;width:57px;height:56px"><svg class="ic" width="29" height="29" style="margin-left:-14.5px;margin-top:-14.5px;stroke-width:1.9"><use href="#i-times"/></svg></div>
<div class="td" style="left:1132px;top:271.0px;font-size:22px;letter-spacing:1.5px">3</div>
<div class="inp" style="left:1236.8px;top:255px;width:245.6px;height:56px;line-height:52px;letter-spacing:.55px;padding-left:12.5px">14.12.2020 14:30</div>
<div class="inp" style="left:1519px;top:255px;width:64px;height:56px"></div>
<div class="td" style="left:1588.5px;top:272.0px;font-size:22px">:</div>
<div class="inp" style="left:1602px;top:255px;width:64px;height:56px"></div>
<div class="td lk b" style="left:1702.3px;top:270.0px">FAW A FC - Cymru FC</div>
<div class="a" style="left:2041px;top:265.5px;width:153px;height:35px;border-radius:5px;background:#f4a00f;color:#fff;font-weight:bold;font-size:19.4px;letter-spacing:.72px;line-height:36px;text-align:center;padding-left:.7px">SCHEDULED</div>
<div class="inp" style="left:2246.8px;top:255px;width:200px;height:56px;line-height:52px;padding-left:13.5px;"></div>
<div class="td lk" style="left:18.3px;top:368.0px;font-size:22px;letter-spacing:0.96px;font-weight:normal;-webkit-text-stroke:.35px #3f4a56">12977247</div>
<div class="td lk b" style="left:169px;top:354.0px">North Wales Coast East<br>Football League<span class="nd">...</span></div>
<div class="inp" style="left:460px;top:352px;width:298px;height:56px;line-height:52px;letter-spacing:.5px">Dinorben Field</div>
<div class="btn" style="left:764px;top:352px;width:56px;height:56px"><svg class="ic" width="26" height="26" style="margin-left:-13px;margin-top:-13px;stroke-width:2.12"><use href="#i-search"/></svg></div>
<div class="btn" style="left:826px;top:352px;width:57px;height:56px"><svg class="ic" width="29" height="29" style="margin-left:-14.5px;margin-top:-14.5px;stroke-width:1.9"><use href="#i-times"/></svg></div>
<div class="inp" style="left:919px;top:349px;width:176px;height:58px;line-height:54px;padding-left:12.5px">Choose<svg class="ic chev" width="21.3" height="12.6" style="stroke-width:2.7"><use href="#i-chev"/></svg></div>
<div class="td" style="left:1132px;top:368.0px;font-size:22px;letter-spacing:1.5px">14</div>
<div class="inp" style="left:1236.8px;top:352px;width:245.6px;height:56px;line-height:52px;letter-spacing:.55px;padding-left:12.5px">28.08.2021 14:30</div>
<div class="inp" style="left:1519px;top:352px;width:64px;height:56px"></div>
<div class="td" style="left:1588.5px;top:369.0px;font-size:22px">:</div>
<div class="inp" style="left:1602px;top:352px;width:64px;height:56px"></div>
<div class="td lk b" style="left:1702.3px;top:354.0px">Abergele FC - CPD<br>Cerrigydrudion</div>
<div class="a" style="left:2041px;top:362.5px;width:153px;height:35px;border-radius:5px;background:#f4a00f;color:#fff;font-weight:bold;font-size:19.4px;letter-spacing:.72px;line-height:36px;text-align:center;padding-left:.7px">SCHEDULED</div>
<div class="inp" style="left:2246.8px;top:352px;width:200px;height:56px;line-height:52px;padding-left:13.5px;"></div>
</div>
</div>
</body>
</html>
